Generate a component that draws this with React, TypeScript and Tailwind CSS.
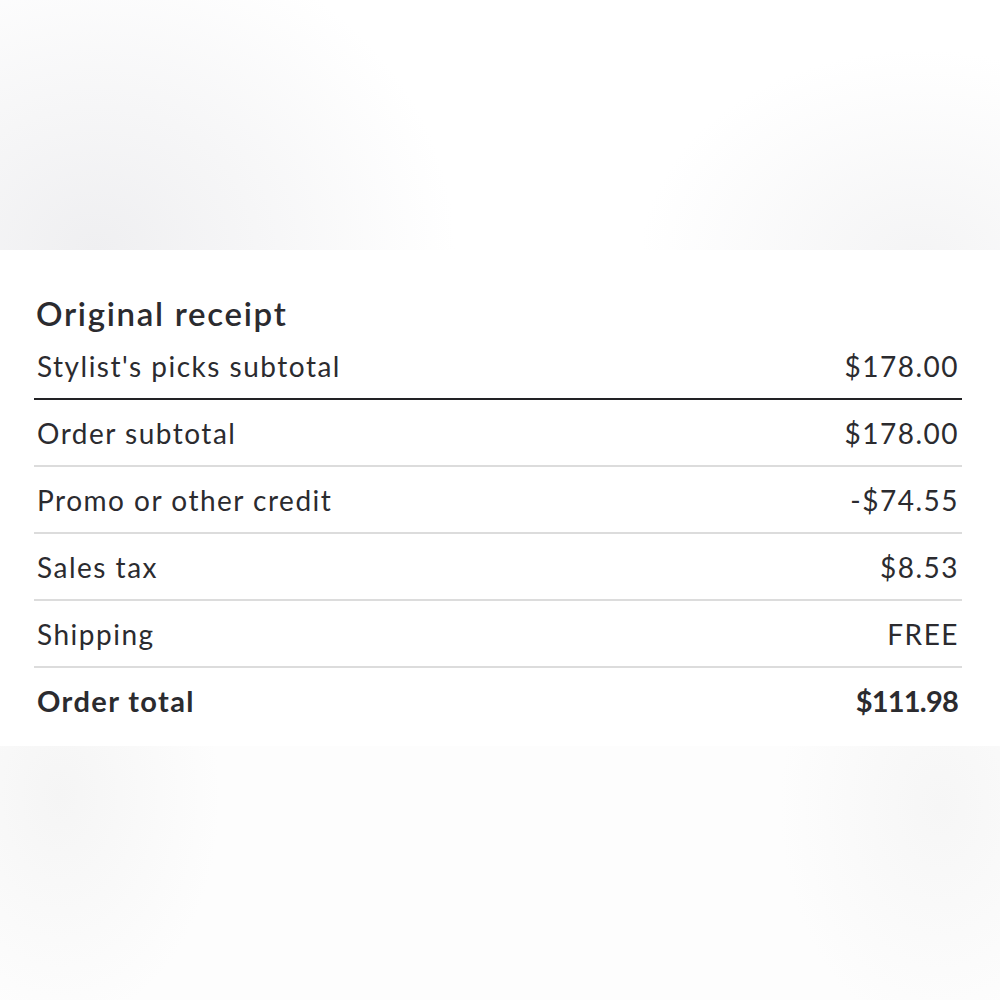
import React from "react";

const rows = [
  { label: "Order subtotal", amount: "$178.00" },
  { label: "Promo or other credit", amount: "-$74.55" },
  { label: "Sales tax", amount: "$8.53" },
  { label: "Shipping", amount: "FREE" },
];

const App = () => {
  return (
    <div
      className="w-[1000px] h-[1000px] flex flex-col bg-white text-[#2b2b2f]"
      style={{ fontFamily: "Lato, 'Open Sans', sans-serif" }}
    >
      <div className="h-[250px] bg-white bg-[image:radial-gradient(ellipse_360px_320px_at_95px_250px,#efeff1,#f6f6f7_45%,rgba(255,255,255,0)),radial-gradient(ellipse_280px_210px_at_920px_260px,#f4f4f5,rgba(255,255,255,0))]" />

      <div className="bg-white pt-[43px] pb-[13px] pl-[34px] pr-[38px]">
        <h2 className="h-[40px] leading-[40px] text-[33px] font-semibold px-[2px] tracking-[1.7px]">
          Original receipt
        </h2>
        <div className="h-[67px] flex items-center justify-between border-b-2 border-[#222225] pl-[3px] pr-[3px] text-[28px] tracking-[1.5px]">
          <span>Stylist's picks subtotal</span>
          <span>$178.00</span>
        </div>
        {rows.map((row, i) => (
          <div
            key={"receipt-row-" + i}
            className="h-[67px] flex items-center justify-between border-b-2 border-[#dcdcdc] pl-[3px] pr-[3px] text-[28px] tracking-[1.5px]"
          >
            <span>{row.label}</span>
            <span>{row.amount}</span>
          </div>
        ))}
        <div className="h-[65px] flex items-center justify-between pl-[3px] pr-[4px] text-[29px] font-bold">
          <span className="tracking-[1.4px]">Order total</span>
          <span className="tracking-[-0.8px]">$111.98</span>
        </div>
      </div>

      <div className="flex-1 bg-[#fdfdfd] bg-[image:radial-gradient(ellipse_160px_230px_at_60px_50px,#f5f5f5,rgba(253,253,253,0)),radial-gradient(ellipse_160px_230px_at_940px_60px,#f6f6f6,rgba(253,253,253,0))]" />
    </div>
  );
};

export default App;
